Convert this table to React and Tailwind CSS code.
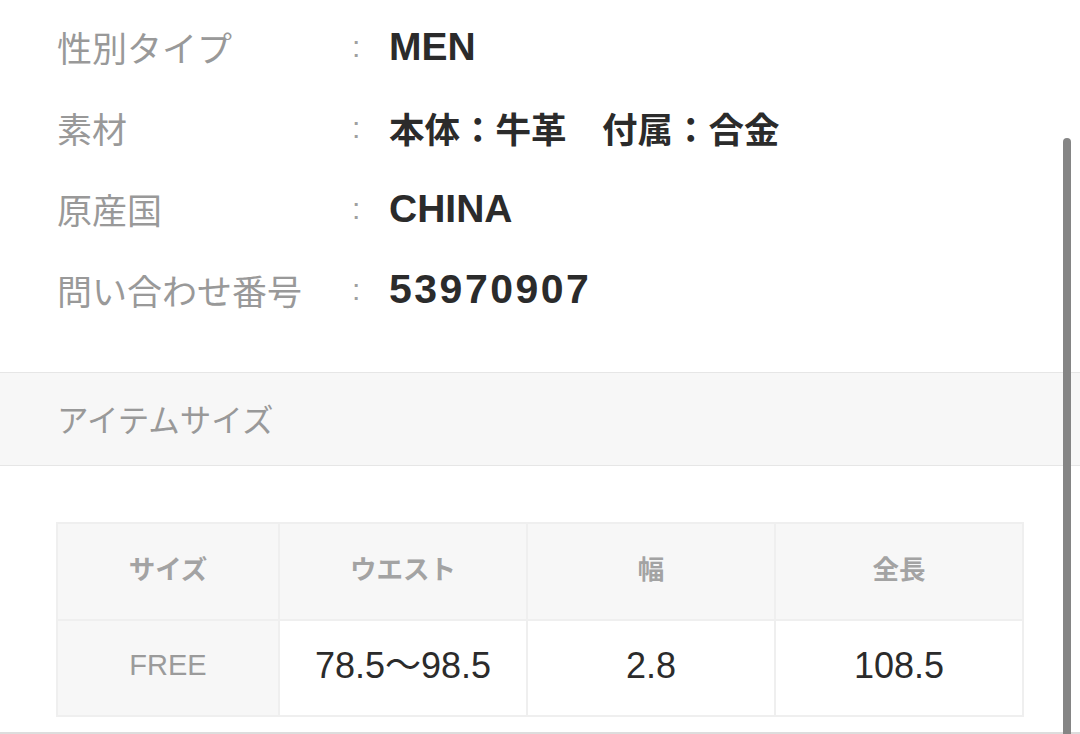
const specs = [
  { label: '性別タイプ', value: 'MEN', latin: true },
  { label: '素材', value: '本体：牛革　付属：合金', latin: false },
  { label: '原産国', value: 'CHINA', latin: true },
  { label: '問い合わせ番号', value: '53970907', latin: true, digits: true },
];

const sizes = [
  { waist: '78.5〜98.5', width: '2.8', length: '108.5', name: 'FREE' },
];

const App = () => {
  return (
    <div className="relative w-[1080px] h-[734px] overflow-hidden bg-white font-['Noto_Sans_CJK_JP',sans-serif]">
      {/* spec list */}
      <div className="pt-[6px] pl-[57px]">
        {specs.map((s) => (
          <div key={s.label} className="flex items-center h-[81px]">
            <div className="w-[295px] text-[35px] leading-none text-[#999999]">{s.label}</div>
            <div className="w-[37px] text-[30px] leading-none text-[#a0a0a0] font-['Liberation_Sans',sans-serif]">:</div>
            {s.latin ? (
              <div
                className={
                  s.digits
                    ? "text-[41px] leading-none font-bold text-[#2b2b2b] tracking-[2.5px] font-['Liberation_Sans',sans-serif]"
                    : "text-[39px] leading-none font-bold text-[#2b2b2b] font-['Liberation_Sans',sans-serif]"
                }
              >
                {s.value}
              </div>
            ) : (
              <div className="text-[35.5px] leading-none font-bold text-[#2b2b2b]">{s.value}</div>
            )}
          </div>
        ))}
      </div>

      {/* section header */}
      <div className="mt-[42px] h-[94px] flex items-center pl-[57px] bg-[#f7f7f7] border-y border-[#e6e6e6]">
        <span className="text-[31.5px] leading-none text-[#999999]">アイテムサイズ</span>
      </div>

      {/* size table */}
      <div className="pt-[56px] pb-[15px] pl-[56px] border-b-2 border-[#dddddd]">
        <div className="w-[968px] grid grid-cols-[220px_1fr_1fr_1fr] gap-[2px] p-[2px] bg-[#efefef]">
          {['サイズ', 'ウエスト', '幅', '全長'].map((h) => (
            <div key={h} className="h-[95px] pb-[8px] flex items-center justify-center bg-[#f7f7f7] text-[26.5px] font-bold text-[#a3a3a3]">
              {h}
            </div>
          ))}
          {sizes.map((r) => (
            <div key={r.name} className="contents">
              <div className="h-[94px] pb-[4px] flex items-center justify-center bg-[#f7f7f7] text-[29px] text-[#9b9b9b] font-['Liberation_Sans',sans-serif]">
                {r.name}
              </div>
              <div className="h-[94px] pb-[4px] flex items-center justify-center bg-white text-[36px] text-[#2b2b2b] font-['Liberation_Sans','Noto_Sans_CJK_JP',sans-serif]">
                {r.waist}
              </div>
              <div className="h-[94px] pb-[4px] flex items-center justify-center bg-white text-[36px] text-[#2b2b2b] font-['Liberation_Sans',sans-serif]">
                {r.width}
              </div>
              <div className="h-[94px] pb-[4px] flex items-center justify-center bg-white text-[36px] text-[#2b2b2b] font-['Liberation_Sans',sans-serif]">
                {r.length}
              </div>
            </div>
          ))}
        </div>
      </div>

      {/* scrollbar overlay */}
      <div className="absolute left-[1063px] top-[138px] w-[8px] h-[620px] rounded-t-full bg-[#858585]" />
    </div>
  );
};

export default App;
